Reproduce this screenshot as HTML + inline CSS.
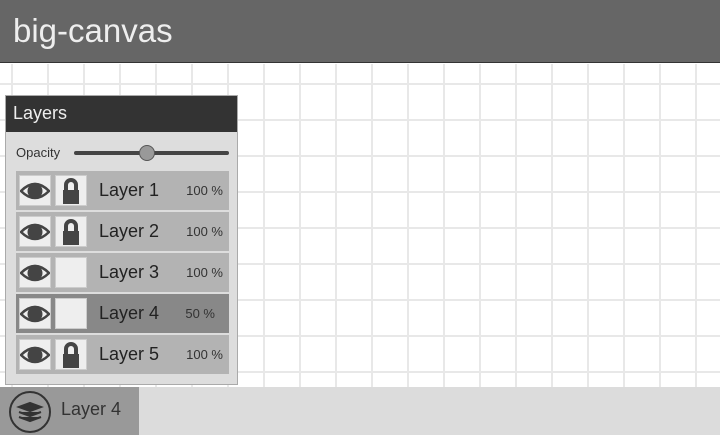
<!DOCTYPE html><html><head><style>
body{margin:0;width:720px;height:435px;overflow:hidden;font-family:"Liberation Sans",sans-serif;position:relative;background:#fff}
.hdr{position:absolute;left:0;top:0;width:720px;height:63px;background:#666;border-bottom:1px solid #333;color:#eee;font-size:33px;line-height:62px;padding-left:13px;box-sizing:border-box}
.grid{position:absolute;left:0;top:64px;width:720px;height:323px;background-image:linear-gradient(90deg,#e8e8e8 2px,transparent 2px),linear-gradient(#e8e8e8 2px,transparent 2px);background-size:36px 36px;background-position:11px 19px}
.panel{position:absolute;left:5px;top:95px;width:233px;height:290px;background:#ddd;border:1px solid #aaa;box-sizing:border-box}
.pt{height:36px;background:#333;color:#eee;font-size:18px;line-height:34px;padding-left:7px}
.op{position:absolute;left:10px;top:49px;font-size:13px;color:#333}
.tr{position:absolute;left:68px;top:55px;width:155px;height:4px;background:#444;border-radius:2px}
.kn{position:absolute;left:133px;top:49px;width:14px;height:14px;border-radius:50%;background:#999;border:1px solid #555}
.row{position:absolute;left:10px;width:213px;height:39px;background:#b3b3b3}
.row.sel{background:#888}
.b{position:absolute;top:4px;width:32px;height:31px;background:#eee;border:1px solid #ccc;box-sizing:border-box}
.b svg{position:absolute;left:0;top:0}
.nm{position:absolute;left:83px;top:9px;font-size:18px;color:#222}
.pc{position:absolute;right:6px;top:12px;font-size:13px;color:#333}
.bar{position:absolute;left:0;top:387px;width:720px;height:48px;background:#dcdcdc}
.tab{position:absolute;left:0;top:0;width:139px;height:48px;background:#999}
</style></head><body>
<div class="hdr">big-canvas</div>
<div class="grid"></div>
<div class="panel"><div class="pt">Layers</div>
<div class="op">Opacity</div><div class="tr"></div><div class="kn"></div>
<div class="row" style="top:75px"><div class="b" style="left:3px"><svg width="30" height="29"><path d="M1 15Q15 1 29 15Q15 29 1 15Z" fill="none" stroke="#444" stroke-width="2.5"/><circle cx="15" cy="15" r="7.5" fill="#444"/></svg></div><div class="b" style="left:39px"><svg width="30" height="29"><path d="M10 15V9a5 5 0 0 1 10 0v6" fill="none" stroke="#444" stroke-width="4"/><rect x="7" y="14" width="16" height="14" fill="#444"/></svg></div><div class="nm">Layer 1</div><div class="pc">100 %</div></div>
<div class="row" style="top:116px"><div class="b" style="left:3px"><svg width="30" height="29"><path d="M1 15Q15 1 29 15Q15 29 1 15Z" fill="none" stroke="#444" stroke-width="2.5"/><circle cx="15" cy="15" r="7.5" fill="#444"/></svg></div><div class="b" style="left:39px"><svg width="30" height="29"><path d="M10 15V9a5 5 0 0 1 10 0v6" fill="none" stroke="#444" stroke-width="4"/><rect x="7" y="14" width="16" height="14" fill="#444"/></svg></div><div class="nm">Layer 2</div><div class="pc">100 %</div></div>
<div class="row" style="top:157px"><div class="b" style="left:3px"><svg width="30" height="29"><path d="M1 15Q15 1 29 15Q15 29 1 15Z" fill="none" stroke="#444" stroke-width="2.5"/><circle cx="15" cy="15" r="7.5" fill="#444"/></svg></div><div class="b" style="left:39px"></div><div class="nm">Layer 3</div><div class="pc">100 %</div></div>
<div class="row sel" style="top:198px"><div class="b" style="left:3px"><svg width="30" height="29"><path d="M1 15Q15 1 29 15Q15 29 1 15Z" fill="none" stroke="#444" stroke-width="2.5"/><circle cx="15" cy="15" r="7.5" fill="#444"/></svg></div><div class="b" style="left:39px"></div><div class="nm">Layer 4</div><div class="pc" style="right:14px">50 %</div></div>
<div class="row" style="top:239px"><div class="b" style="left:3px"><svg width="30" height="29"><path d="M1 15Q15 1 29 15Q15 29 1 15Z" fill="none" stroke="#444" stroke-width="2.5"/><circle cx="15" cy="15" r="7.5" fill="#444"/></svg></div><div class="b" style="left:39px"><svg width="30" height="29"><path d="M10 15V9a5 5 0 0 1 10 0v6" fill="none" stroke="#444" stroke-width="4"/><rect x="7" y="14" width="16" height="14" fill="#444"/></svg></div><div class="nm">Layer 5</div><div class="pc">100 %</div></div>
</div>
<div class="bar"><div class="tab"><svg style="position:absolute;left:8px;top:3px" width="44" height="44"><circle cx="22" cy="22" r="20" fill="none" stroke="#333" stroke-width="2"/><path d="M11 17l11-4 11 4-11 4z M11 22l11 4 11-4 M11 27l11 4 11-4" fill="#333" stroke="#333" stroke-width="2"/></svg><div style="position:absolute;left:61px;top:12px;font-size:18px;color:#333">Layer 4</div></div></div>
</body></html>
